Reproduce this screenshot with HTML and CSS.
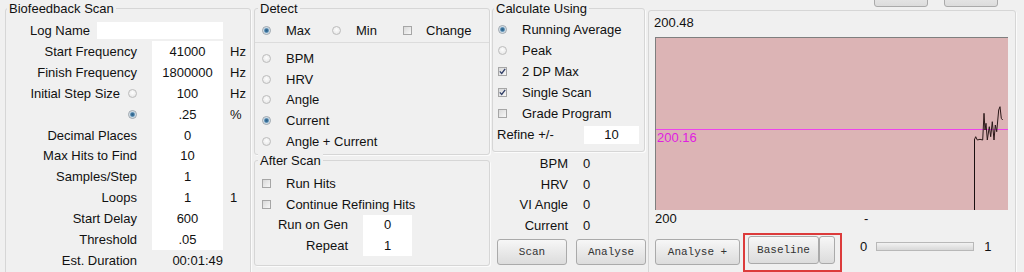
FILE: index.html
```html
<!DOCTYPE html>
<html lang="en">
<head>
    <meta charset="UTF-8">
    <title>Biofeedback Scan</title>
    <link rel="stylesheet" href="styles.css">
</head>
<body>
    <div class="app">
        <div class="group scan">
            <div class="group-title">Biofeedback Scan</div>
            <div class="log-row">
                <span class="log-label">Log Name</span>
                <span class="field log-field"></span>
            </div>
            <div class="scan-grid">
                <span class="lbl">Start Frequency</span><span class="val">41000</span><span class="unit">Hz</span>
                <span class="lbl">Finish Frequency</span><span class="val">1800000</span><span class="unit">Hz</span>
                <span class="lbl">Initial Step Size <i class="radio"></i></span><span class="val">100</span><span class="unit">Hz</span>
                <span class="lbl"><i class="radio on"></i></span><span class="val">.25</span><span class="unit">%</span>
                <span class="lbl">Decimal Places</span><span class="val">0</span><span class="unit"></span>
                <span class="lbl">Max Hits to Find</span><span class="val">10</span><span class="unit"></span>
                <span class="lbl">Samples/Step</span><span class="val">1</span><span class="unit"></span>
                <span class="lbl">Loops</span><span class="val">1</span><span class="unit">1</span>
                <span class="lbl">Start Delay</span><span class="val">600</span><span class="unit"></span>
                <span class="lbl">Threshold</span><span class="val">.05</span><span class="unit"></span>
                <span class="lbl">Est. Duration</span><span class="val plain">00:01:49</span><span class="unit"></span>
            </div>
        </div>

        <div class="col-mid">
            <div class="group detect">
                <div class="group-title">Detect</div>
                <div class="mode-row">
                    <span class="opt max"><i class="radio on"></i>Max</span>
                    <span class="opt min"><i class="radio"></i>Min</span>
                    <span class="opt"><i class="check"></i>Change</span>
                </div>
                <div class="list">
                    <div class="row"><i class="radio"></i>BPM</div>
                    <div class="row"><i class="radio"></i>HRV</div>
                    <div class="row"><i class="radio"></i>Angle</div>
                    <div class="row"><i class="radio on"></i>Current</div>
                    <div class="row"><i class="radio"></i>Angle + Current</div>
                </div>
            </div>
            <div class="group after">
                <div class="group-title">After Scan</div>
                <div class="list">
                    <div class="row"><i class="check"></i>Run Hits</div>
                    <div class="row"><i class="check"></i>Continue Refining Hits</div>
                </div>
                <div class="gen-grid">
                    <span class="lbl-plain">Run on Gen</span><span class="val">0</span>
                    <span class="lbl-plain">Repeat</span><span class="val">1</span>
                </div>
            </div>
        </div>

        <div class="col-calc">
            <div class="group calc">
                <div class="group-title">Calculate Using</div>
                <div class="list">
                    <div class="row"><i class="radio on"></i>Running Average</div>
                    <div class="row"><i class="radio"></i>Peak</div>
                    <div class="row"><i class="check on"><svg width="7" height="7" viewBox="0 0 7 7"><path d="M0.8 3.4 L2.7 5.4 L6.2 0.8" fill="none" stroke="#2f3d66" stroke-width="1.3"/></svg></i>2 DP Max</div>
                    <div class="row"><i class="check on"><svg width="7" height="7" viewBox="0 0 7 7"><path d="M0.8 3.4 L2.7 5.4 L6.2 0.8" fill="none" stroke="#2f3d66" stroke-width="1.3"/></svg></i>Single Scan</div>
                    <div class="row"><i class="check"></i>Grade Program</div>
                </div>
                <div class="refine-row">
                    <span class="refine-label">Refine +/-</span>
                    <span class="field refine-field">10</span>
                </div>
            </div>
            <div class="readouts">
                <span class="lbl-plain">BPM</span><span>0</span>
                <span class="lbl-plain">HRV</span><span>0</span>
                <span class="lbl-plain">VI Angle</span><span>0</span>
                <span class="lbl-plain">Current</span><span>0</span>
            </div>
            <div class="btn-row">
                <button class="btn">Scan</button>
                <button class="btn">Analyse</button>
            </div>
        </div>

        <div class="col-graph">
            <div class="top-btns">
                <button class="btn small-top"></button>
                <button class="btn small-top"></button>
            </div>
            <div class="group graph">
                <div class="axis-max">200.48</div>
                <div class="plot">
                    <svg class="trace" width="352" height="172" viewBox="0 0 352 172">
                        <rect x="0" y="91" width="352" height="1" fill="#ec45ec"/>
                        <rect x="318" y="102" width="1" height="70" fill="#1a1010"/>
                        <polyline fill="none" stroke="#2a1818" stroke-width="1"
                            points="318.3,102 319.7,98.7 321.3,102 324,101.3 326.7,102 328,75.3 329,92 330,85.3 331.3,102 333.3,88.7 334.7,98.7 336.3,83.7 338,102 339.3,87 340.7,93.7 342.7,72 344,68.7 345.3,80.3 346.7,82"/>
                    </svg>
                    <span class="peak-label">200.16</span>
                </div>
                <div class="axis-row">
                    <span class="axis-min">200</span>
                    <span>-</span>
                </div>
                <div class="bottom-row">
                    <button class="btn wide-btn">Analyse +</button>
                    <div class="highlight">
                        <button class="btn base-btn">Baseline</button>
                        <button class="btn drop-btn"></button>
                    </div>
                    <div class="range">
                        <span>0</span>
                        <span class="bar"></span>
                        <span>1</span>
                    </div>
                </div>
            </div>
        </div>
    </div>
</body>
</html>
```

FILE: styles.css
```css
body {
    margin: 0;
    background: #f0f0f0;
    font-family: "Liberation Sans", Arial, sans-serif;
    font-size: 13px;
    color: #111;
    overflow: hidden;
}
.app {
    display: flex;
    align-items: flex-start;
    height: 272px;
    overflow: hidden;
}
.group {
    box-sizing: border-box;
    border: 1px solid #d6d6d6;
    border-radius: 3px;
    box-shadow: 1px 1px 0 #fbfbfb;
}
.group-title {
    width: fit-content;
    margin: -8px 0 0 1px;
    padding: 0 2px;
    line-height: 16px;
    background: #f0f0f0;
}
.field {
    background: #fff;
}

/* radios and checkboxes */
.radio, .check {
    flex: none;
    display: inline-block;
    box-sizing: border-box;
    width: 9px;
    height: 9px;
}
.radio {
    border: 1px solid #bcbcbc;
    border-radius: 50%;
    background: radial-gradient(circle at 50% 40%, #fdfdfd, #e2e2e2);
}
.radio.on {
    border-color: #9aa4ad;
    background: radial-gradient(circle, #2d5f86 0, #3f77a0 1.6px, #a9c6db 2.6px, #f2f2f2 3.4px);
}
.check {
    border: 1px solid #a6a6a6;
    background: linear-gradient(135deg, #d9d9d9, #f7f7f7);
}
.check svg {
    display: block;
}

/* scan settings */
.scan {
    width: 246px;
    height: 290px;
    margin: 8px 0 0 5px;
}
.log-row {
    display: flex;
    align-items: center;
    height: 21px;
    margin-top: 3px;
    padding-left: 24px;
}
.log-label {
    width: 67px;
}
.log-field {
    width: 126px;
    height: 17px;
}
.scan-grid {
    display: grid;
    grid-template-columns: 146px 71px 1fr;
    grid-auto-rows: 20.9px;
}
.scan-grid > span {
    display: flex;
    align-items: center;
}
.lbl {
    justify-content: flex-end;
    gap: 8px;
    padding-right: 15px;
}
.val {
    justify-content: center;
    background: #fff;
}
.scan-grid .val.plain {
    background: none;
    justify-content: flex-end;
}
.unit {
    padding-left: 7px;
}

/* detect + after scan */
.col-mid {
    width: 236px;
    margin-left: 3px;
}
.detect {
    height: 147px;
    margin-top: 8px;
}
.detect .group-title, .after .group-title {
    margin-left: 3px;
}
.mode-row {
    display: flex;
    align-items: center;
    height: 23px;
    margin-top: 2px;
    padding-left: 7px;
    border-bottom: 1px solid #dcdcdc;
}
.opt {
    display: flex;
    align-items: center;
}
.opt.max { width: 70px; }
.opt.min { width: 71px; }
.opt .radio { margin-right: 15px; }
.opt .check { margin-right: 14px; }
.list {
    padding-left: 7px;
}
.detect .list {
    margin-top: 5px;
}
.row {
    display: flex;
    align-items: center;
    height: 20.8px;
}
.row .radio, .row .check {
    margin-right: 15px;
}
.after {
    height: 106px;
    margin-top: 5px;
}
.after .list {
    margin-top: 4px;
}
.gen-grid {
    display: grid;
    grid-template-columns: 93px 49px;
    column-gap: 15px;
    grid-auto-rows: 20.8px;
}
.gen-grid > span, .readouts > span {
    display: flex;
    align-items: center;
}
.lbl-plain {
    justify-content: flex-end;
}

/* calculate */
.col-calc {
    width: 153px;
    margin-left: 2px;
}
.calc {
    height: 144px;
    margin-top: 8px;
}
.calc .list {
    margin-top: 2.6px;
    padding-left: 5px;
}
.refine-row {
    display: flex;
    align-items: center;
    height: 20.8px;
    margin-top: 1px;
    padding-left: 4px;
}
.refine-label {
    width: 87px;
}
.refine-field {
    width: 55px;
    height: 18px;
    line-height: 18px;
    text-align: center;
}
.readouts {
    display: grid;
    grid-template-columns: 76px 1fr;
    column-gap: 15px;
    grid-auto-rows: 20.8px;
    margin-top: 1px;
}
.btn-row {
    display: flex;
    gap: 9px;
    margin-top: 3px;
    padding-left: 5px;
}
.btn {
    flex: none;
    box-sizing: border-box;
    width: 70px;
    height: 26px;
    padding: 0;
    border: 1px solid #aaaaaa;
    border-radius: 3px;
    background: linear-gradient(#f7f7f7, #e9e9e9 50%, #dcdcdc);
    font-family: "Liberation Mono", "Courier New", monospace;
    font-size: 11px;
    color: #333;
}

/* graph */
.col-graph {
    width: 368px;
    margin-left: 3px;
}
.top-btns {
    display: flex;
    gap: 16px;
    margin: -17px 0 0 226px;
}
.small-top {
    width: 54px;
    height: 24px;
}
.graph {
    height: 280px;
    margin-top: 3px;
    padding: 4px 0 0 5px;
}
.axis-max {
    line-height: 16px;
}
.plot {
    position: relative;
    box-sizing: border-box;
    width: 353px;
    height: 173px;
    margin: 6px 0 0 1px;
    border-top: 1px solid #7f7f7f;
    border-left: 1px solid #7f7f7f;
    background: #dcb4b5;
}
.trace {
    display: block;
}
.peak-label {
    position: absolute;
    left: 1px;
    top: 92px;
    line-height: 16px;
    color: #e020e0;
}
.axis-row {
    display: flex;
    line-height: 16px;
    margin-top: 1px;
    padding-left: 1px;
}
.axis-min {
    width: 209px;
}
.bottom-row {
    display: flex;
    align-items: flex-start;
    margin-top: 6px;
    padding-left: 1px;
}
.wide-btn {
    width: 85px;
    margin-top: 6px;
}
.highlight {
    display: flex;
    box-sizing: border-box;
    height: 39px;
    margin-left: 3px;
    padding: 1px 5px 0 3px;
    border: 2px solid #dc3b3b;
}
.base-btn {
    width: 71px;
    height: 28px;
}
.drop-btn {
    width: 16px;
    height: 28px;
}
.range {
    display: flex;
    align-items: center;
    height: 18px;
    margin: 4px 0 0 18px;
}
.bar {
    box-sizing: border-box;
    width: 98px;
    height: 9px;
    margin: 0 10px 0 9px;
    border: 1px solid #b8b8b8;
    background: linear-gradient(#f2f2f2, #d8d8d8);
}
```
